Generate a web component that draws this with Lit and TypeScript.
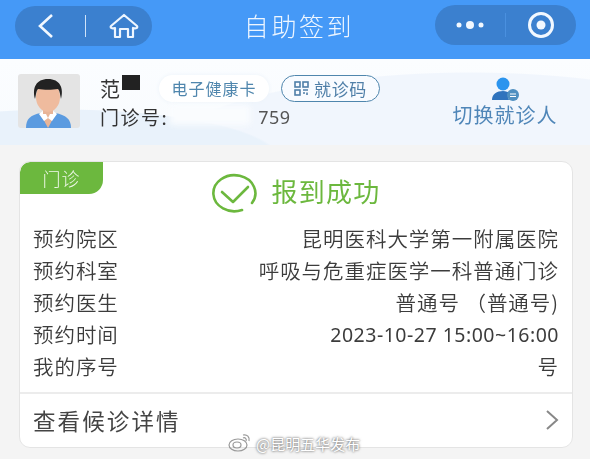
import { LitElement, html, css } from "lit";
import { customElement } from "lit/decorators.js";

const rows: [string, string][] = [
  ["预约院区", "昆明医科大学第一附属医院"],
  ["预约科室", "呼吸与危重症医学一科普通门诊"],
  ["预约医生", "普通号 （普通号)"],
  ["预约时间", "2023-10-27 15:00~16:00"],
  ["我的序号", "号"],
];

@customElement("app-root")
export class AppRoot extends LitElement {
  static styles = css`
    :host {
      display: block;
      width: 590px;
      height: 459px;
      overflow: hidden;
      position: relative;
      background: #f4f4f4;
      font-family: "Noto Sans CJK SC", "Noto Sans", sans-serif;
      font-weight: 400;
      color: #333;
    }
    .blurred { filter: blur(0.45px); height: 459px; }
    .nav {
      height: 59px;
      background: #4599f7;
      display: flex;
      align-items: flex-start;
      justify-content: space-between;
      padding: 5px 14px 0 15px;
      box-sizing: border-box;
      position: relative;
    }
    .capsule {
      height: 40px;
      border-radius: 20px;
      background: #3b80cf;
      display: flex;
      align-items: center;
      box-sizing: border-box;
    }
    .cap-left { width: 137px; padding-left: 22px; margin-top: 1px; }
    .cap-right { width: 141px; }
    .cap-cell { flex: 1; display: flex; align-items: center; justify-content: center; }
    .cap-div { width: 1px; height: 24px; background: #4a90df; }
    .sep { width: 1px; height: 22px; background: #cfe3f9; margin-left: 31px; margin-right: 23px; }
    .title {
      position: absolute;
      left: 8px;
      right: 0;
      top: 8px;
      text-align: center;
      color: #eef6ff;
      font-size: 25px;
      font-weight: 300;
      line-height: 34px;
      letter-spacing: 2.6px;
      pointer-events: none;
    }
    .patient {
      height: 86px;
      box-sizing: border-box;
      padding: 15px 0 0 18px;
      display: flex;
      position: relative;
      background:
        radial-gradient(ellipse 220px 50px at 60px 100px, #e9f2fb 98%, transparent 100%),
        radial-gradient(ellipse 340px 107px at 470px 120px, #f1f6fd 99%, transparent 100%),
        linear-gradient(#fbfdff, #f8fbfe);
    }
    .avatar { width: 62px; height: 54px; border-radius: 3px; background: #e4e4e4; overflow: hidden; flex: none; }
    .info { width: 340px; flex: none; margin-left: 20px; }
    .line1 { display: flex; align-items: center; height: 28px; }
    .name { font-size: 20px; width: 22px; color: #333; }
    .mask { width: 18px; height: 15px; background: #222; margin-top: -12px; }
    .pill {
      height: 27px;
      box-sizing: border-box;
      border-radius: 14px;
      display: flex;
      align-items: center;
      justify-content: center;
      font-size: 16px;
      letter-spacing: 1px;
      color: #4f86ad;
      flex: none;
    }
    .pill-card { width: 110px; background: #fff; margin-left: 19px; box-shadow: 0 0 4px #ecf3f9; }
    .pill-code { width: 99px; border: 1.5px solid #4f86ad; color: #4f7fa8; margin-left: 12px; background: #f8fbff; gap: 5px; font-size: 17px; letter-spacing: .6px; }
    .line2 { font-size: 19px; line-height: 26px; letter-spacing: 1.5px; margin-top: 2px; display: flex; }
    .num { margin-left: 90px; font-size: 18px; font-family: "Noto Sans", sans-serif; letter-spacing: .4px; color: #555; }
    .switch { margin-left: 11px; display: flex; flex-direction: column; align-items: center; color: #4f86b8; font-size: 20px; letter-spacing: 1px; line-height: 27px; padding-top: 3px; width: 108px; flex: none; }
    .switch svg { display: block; }
    .wipe { position: absolute; left: 170px; top: 46px; width: 80px; height: 20px; background: #fafcfe; filter: blur(3px); }
    .card {
      margin: 16px 17px 0 19px;
      height: 287px;
      background: #fff;
      border: 1px solid #e4e4e4;
      border-radius: 11px;
      box-sizing: border-box;
      overflow: hidden;
    }
    .head { display: flex; height: 59px; position: relative; justify-content: center; align-items: center; padding-top: 2px; box-sizing: border-box; }
    .tag {
      position: absolute;
      left: 0;
      top: 0;
      width: 83px;
      height: 32px;
      background: #6cb83e;
      border-radius: 10px 0 14px 0;
      color: #f0f8ea;
      font-size: 18px;
      font-weight: 300;
      display: flex;
      align-items: center;
      justify-content: center;
      letter-spacing: 1px;
      box-sizing: border-box;
    }
    .ok { display: flex; align-items: center; gap: 14px; color: #6cb83e; font-size: 26px; letter-spacing: 1.3px; }
    .ok span { margin-top: -4px; }
    .rows { padding: 1px 13px 0; display: flex; flex-direction: column; }
    .row { display: flex; justify-content: space-between; height: 32px; align-items: center; font-size: 20.5px; letter-spacing: .95px; color: #3c3c3c; font-weight: 350; }
    .v.ascii { font-family: "Noto Sans", sans-serif; font-size: 19.5px; letter-spacing: .5px; font-weight: 400; }
    .foot {
      margin-top: 10px;
      border-top: 2px solid #ececec;
      height: 53px;
      box-sizing: border-box;
      display: flex;
      align-items: center;
      justify-content: space-between;
      padding: 0 13px;
      font-size: 22.5px;
      letter-spacing: 2.1px;
      color: #444;
    }
    .wm {
      position: absolute;
      left: 256px;
      top: 433px;
      color: #fff;
      font-size: 15px;
      line-height: 22px;
      text-shadow: 0 0 3px #777, 0 0 2px #888;
    }
    .wm svg { position: absolute; left: -28px; top: -1px; }
  `;

  render() {
    return html`
      <div class="blurred">
        <div class="nav">
          <div class="capsule cap-left">
            <svg width="17" height="26" viewBox="0 0 17 26"><path d="M15 2 3 13l12 11" fill="none" stroke="#f2f8ff" stroke-width="2.6"/></svg>
            <div class="sep"></div>
            <svg width="30" height="26" viewBox="0 0 30 26" fill="none" stroke="#eef6ff" stroke-width="2.2" stroke-linejoin="round"><path d="M2 13 15 2l13 11c1 2-1 3-4 2v9h-5v-8h-8v8H6v-9c-3 1-5 0-4-2z"/></svg>
          </div>
          <div class="title">自助签到</div>
          <div class="capsule cap-right">
            <div class="cap-cell">
              <svg width="30" height="10" viewBox="0 0 30 10" fill="#f2f8ff"><circle cx="4" cy="5" r="2.5"/><circle cx="15" cy="5" r="4"/><circle cx="26" cy="5" r="2.5"/></svg>
            </div>
            <div class="cap-div"></div>
            <div class="cap-cell">
              <svg width="28" height="28" viewBox="0 0 28 28"><circle cx="14" cy="14" r="11.5" fill="none" stroke="#f2f8ff" stroke-width="3"/><circle cx="14" cy="14" r="4.5" fill="#f2f8ff"/></svg>
            </div>
          </div>
        </div>
        <div class="patient">
          <div class="avatar">
            <svg width="62" height="54" viewBox="0 0 62 54">
              <path d="M8 54c0-9 4-13 15-15h14c11 2 16 6 16 15z" fill="#5b9be0"/>
              <path d="M22 39h16l-8 15z" fill="#e8b598"/>
              <path d="M21 40l5-4 4 8-4 3zM39 40l-5-4-4 8 4 3z" fill="#fff"/>
              <rect x="25" y="30" width="10" height="10" fill="#e8b598"/>
              <ellipse cx="30" cy="23" rx="12" ry="15" fill="#efbb9e"/>
              <path d="M17 25c-3-11 1-20 13-20s16 9 13 20c-1-4-1-8-3-10-6 1-14 1-20 0-2 2-2 6-3 10z" fill="#222"/>
            </svg>
          </div>
          <div class="info">
            <div class="line1">
              <span class="name">范</span><span class="mask"></span>
              <span class="pill pill-card">电子健康卡</span>
              <span class="pill pill-code">
                <svg width="15" height="15" viewBox="0 0 15 15" fill="none" stroke="#4f7fa8" stroke-width="1.6"><rect x="1" y="1" width="5" height="5"/><rect x="9" y="1" width="5" height="5"/><rect x="1" y="9" width="5" height="5"/><path d="M9 9h5M9 12h2M13 11.5V14"/></svg>
                就诊码
              </span>
            </div>
            <div class="line2"><span>门诊号:</span><span class="num">759</span></div>
          </div>
          <div class="switch">
            <svg width="32" height="24" viewBox="0 0 32 24">
              <circle cx="14" cy="7" r="6.5" fill="#2b94ee"/>
              <path d="M3 23c0-6 5-9 11-9 3 0 5 1 7 2-2 2-2 5-1 7z" fill="#2f73bd"/>
              <circle cx="24" cy="18" r="6" fill="#4f8fc0"/>
              <path d="M21 17h6M21 19.5h6" stroke="#fff" stroke-width="1"/>
            </svg>
            切换就诊人
          </div>
          <div class="wipe"></div>
        </div>
        <div class="card">
          <div class="head">
            <div class="tag">门诊</div>
            <div class="ok">
              <svg width="46" height="40" viewBox="0 0 46 40" fill="none" stroke="#6cb83e" stroke-width="2.6" stroke-linecap="round" stroke-linejoin="round"><path d="M31 37A21 18 0 1 1 41 30"/><path d="M11 19l11 10 15-15"/></svg>
              <span>报到成功</span>
            </div>
          </div>
          <div class="rows">
            ${rows.map(
              ([k, v], i) => html`<div class="row"><span>${k}</span><span class="v ${i === 3 ? "ascii" : ""}">${v}</span></div>`
            )}
          </div>
          <div class="foot">
            <span>查看候诊详情</span>
            <svg width="14" height="22" viewBox="0 0 14 22"><path d="M2 2l10 9-10 9" fill="none" stroke="#888" stroke-width="2"/></svg>
          </div>
        </div>
      </div>
      <div class="wm">
        <svg width="24" height="20" viewBox="0 0 24 20" fill="none" stroke="#999" stroke-width="1.2"><ellipse cx="10" cy="13" rx="9" ry="6"/><ellipse cx="9" cy="13" rx="4" ry="3"/><path d="M15 3c4-1 7 2 6 6M15 6c2-1 4 1 3 3"/></svg>
        @昆明五华发布
      </div>
    `;
  }
}
